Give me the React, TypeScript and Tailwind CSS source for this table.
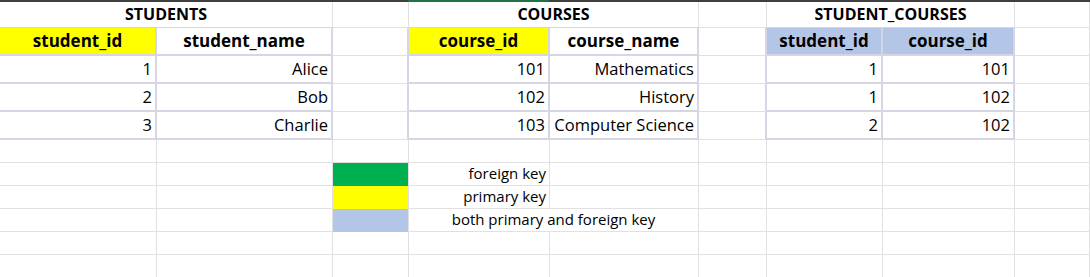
import React from "react";

type Variant = "plain" | "tbl" | "edge" | "title" | "green" | "yellow" | "blue";
type Align = "left" | "center" | "right";
type Kind = "title" | "head" | "data" | "legend";

type CellSpec = {
  text?: string;
  variant?: Variant;
  span?: boolean;
  align?: Align;
  kind?: Kind;
  fill?: "yellow" | "blue";
};

const variantClass: Record<Variant, string> = {
  plain: "border-r border-b border-[#e1e1e1]",
  tbl: "border-r-2 border-b-2 border-[#d6d5e3]",
  edge: "border-r-2 border-b border-r-[#d6d5e3] border-b-[#e1e1e1]",
  title: "border-r border-b border-r-[#e1e1e1] border-b-[#d6d5e3]",
  green: "border-r border-[#e1e1e1] bg-[#00b050]",
  yellow: "border-r border-[#e1e1e1] bg-[#ffff00]",
  blue: "border-r border-[#e1e1e1] bg-[#b4c6e7]",
};

const alignClass: Record<Align, string> = {
  left: "justify-start pl-[3px]",
  center: "justify-center",
  right: "justify-end pr-[3px]",
};

const kindClass: Record<Kind, string> = {
  title: "text-[16px] font-bold leading-[20px] pb-[3px]",
  head: "text-[17px] font-bold leading-[20px] pb-[3px]",
  data: "text-[16.5px] leading-[20px] pb-[3px]",
  legend: "text-[15px] leading-[18px] pb-[3px]",
};

const fillClass = {
  yellow: "bg-[#ffff00]",
  blue: "bg-[#b4c6e7]",
};

const P: CellSpec = { variant: "plain" };
const E: CellSpec = { variant: "edge" };

const title = (text: string): CellSpec => ({
  text,
  variant: "title",
  span: true,
  align: "center",
  kind: "title",
});
const head = (text: string, fill?: "yellow" | "blue"): CellSpec => ({
  text,
  variant: "tbl",
  align: "center",
  kind: "head",
  fill,
});
const val = (text: string): CellSpec => ({
  text,
  variant: "tbl",
  align: "right",
  kind: "data",
});

const rows: CellSpec[][] = [
  [title("STUDENTS"), P, title("COURSES"), P, title("STUDENT_COURSES"), P],
  [
    head("student_id", "yellow"),
    head("student_name"),
    E,
    head("course_id", "yellow"),
    head("course_name"),
    E,
    head("student_id", "blue"),
    head("course_id", "blue"),
    P,
  ],
  [val("1"), val("Alice"), E, val("101"), val("Mathematics"), E, val("1"), val("101"), P],
  [val("2"), val("Bob"), E, val("102"), val("History"), E, val("1"), val("102"), P],
  [val("3"), val("Charlie"), E, val("103"), val("Computer Science"), E, val("2"), val("102"), P],
  [P, P, P, P, P, P, P, P, P],
  [
    P,
    P,
    { variant: "green" },
    { text: "foreign key", variant: "plain", align: "right", kind: "legend" },
    P,
    P,
    P,
    P,
    P,
  ],
  [
    P,
    P,
    { variant: "yellow" },
    { text: "primary key", variant: "plain", align: "right", kind: "legend" },
    P,
    P,
    P,
    P,
    P,
  ],
  [
    P,
    P,
    { variant: "blue" },
    {
      text: "both primary and foreign key",
      variant: "plain",
      span: true,
      align: "center",
      kind: "legend",
    },
    P,
    P,
    P,
    P,
  ],
  [P, P, P, P, P, P, P, P, P],
  [P, P, P, P, P, P, P, P, P],
];

function Cell({ spec }: { spec: CellSpec }) {
  const v = spec.variant ?? "plain";
  const classes = [
    "flex items-end whitespace-nowrap overflow-visible text-black",
    variantClass[v],
    spec.span ? "col-span-2" : "",
    spec.fill ? fillClass[spec.fill] : "",
    spec.text ? alignClass[spec.align ?? "right"] : "",
    spec.text ? kindClass[spec.kind ?? "data"] : "",
  ].join(" ");
  return <div className={classes}>{spec.text}</div>;
}

export default function App() {
  return (
    <div className="w-[1090px] h-[277px] overflow-hidden bg-white font-['Open_Sans','Noto_Sans',sans-serif]">
      {/* column header edge, active column marked green */}
      <div className="flex h-[2px]">
        <div className="w-[408px] bg-[#3f3f3f]" />
        <div className="w-[141px] bg-[#217346]" />
        <div className="flex-1 bg-[#3f3f3f]" />
      </div>
      <div className="grid grid-cols-[157px_176px_76px_141px_149px_68px_116px_132px_1fr] grid-rows-[26px_28px_28px_28px_28px_23px_23px_23px_23px_23px_23px]">
        {rows.map((row, r) =>
          row.map((spec, c) => <Cell key={`${r}-${c}`} spec={spec} />)
        )}
      </div>
    </div>
  );
}
